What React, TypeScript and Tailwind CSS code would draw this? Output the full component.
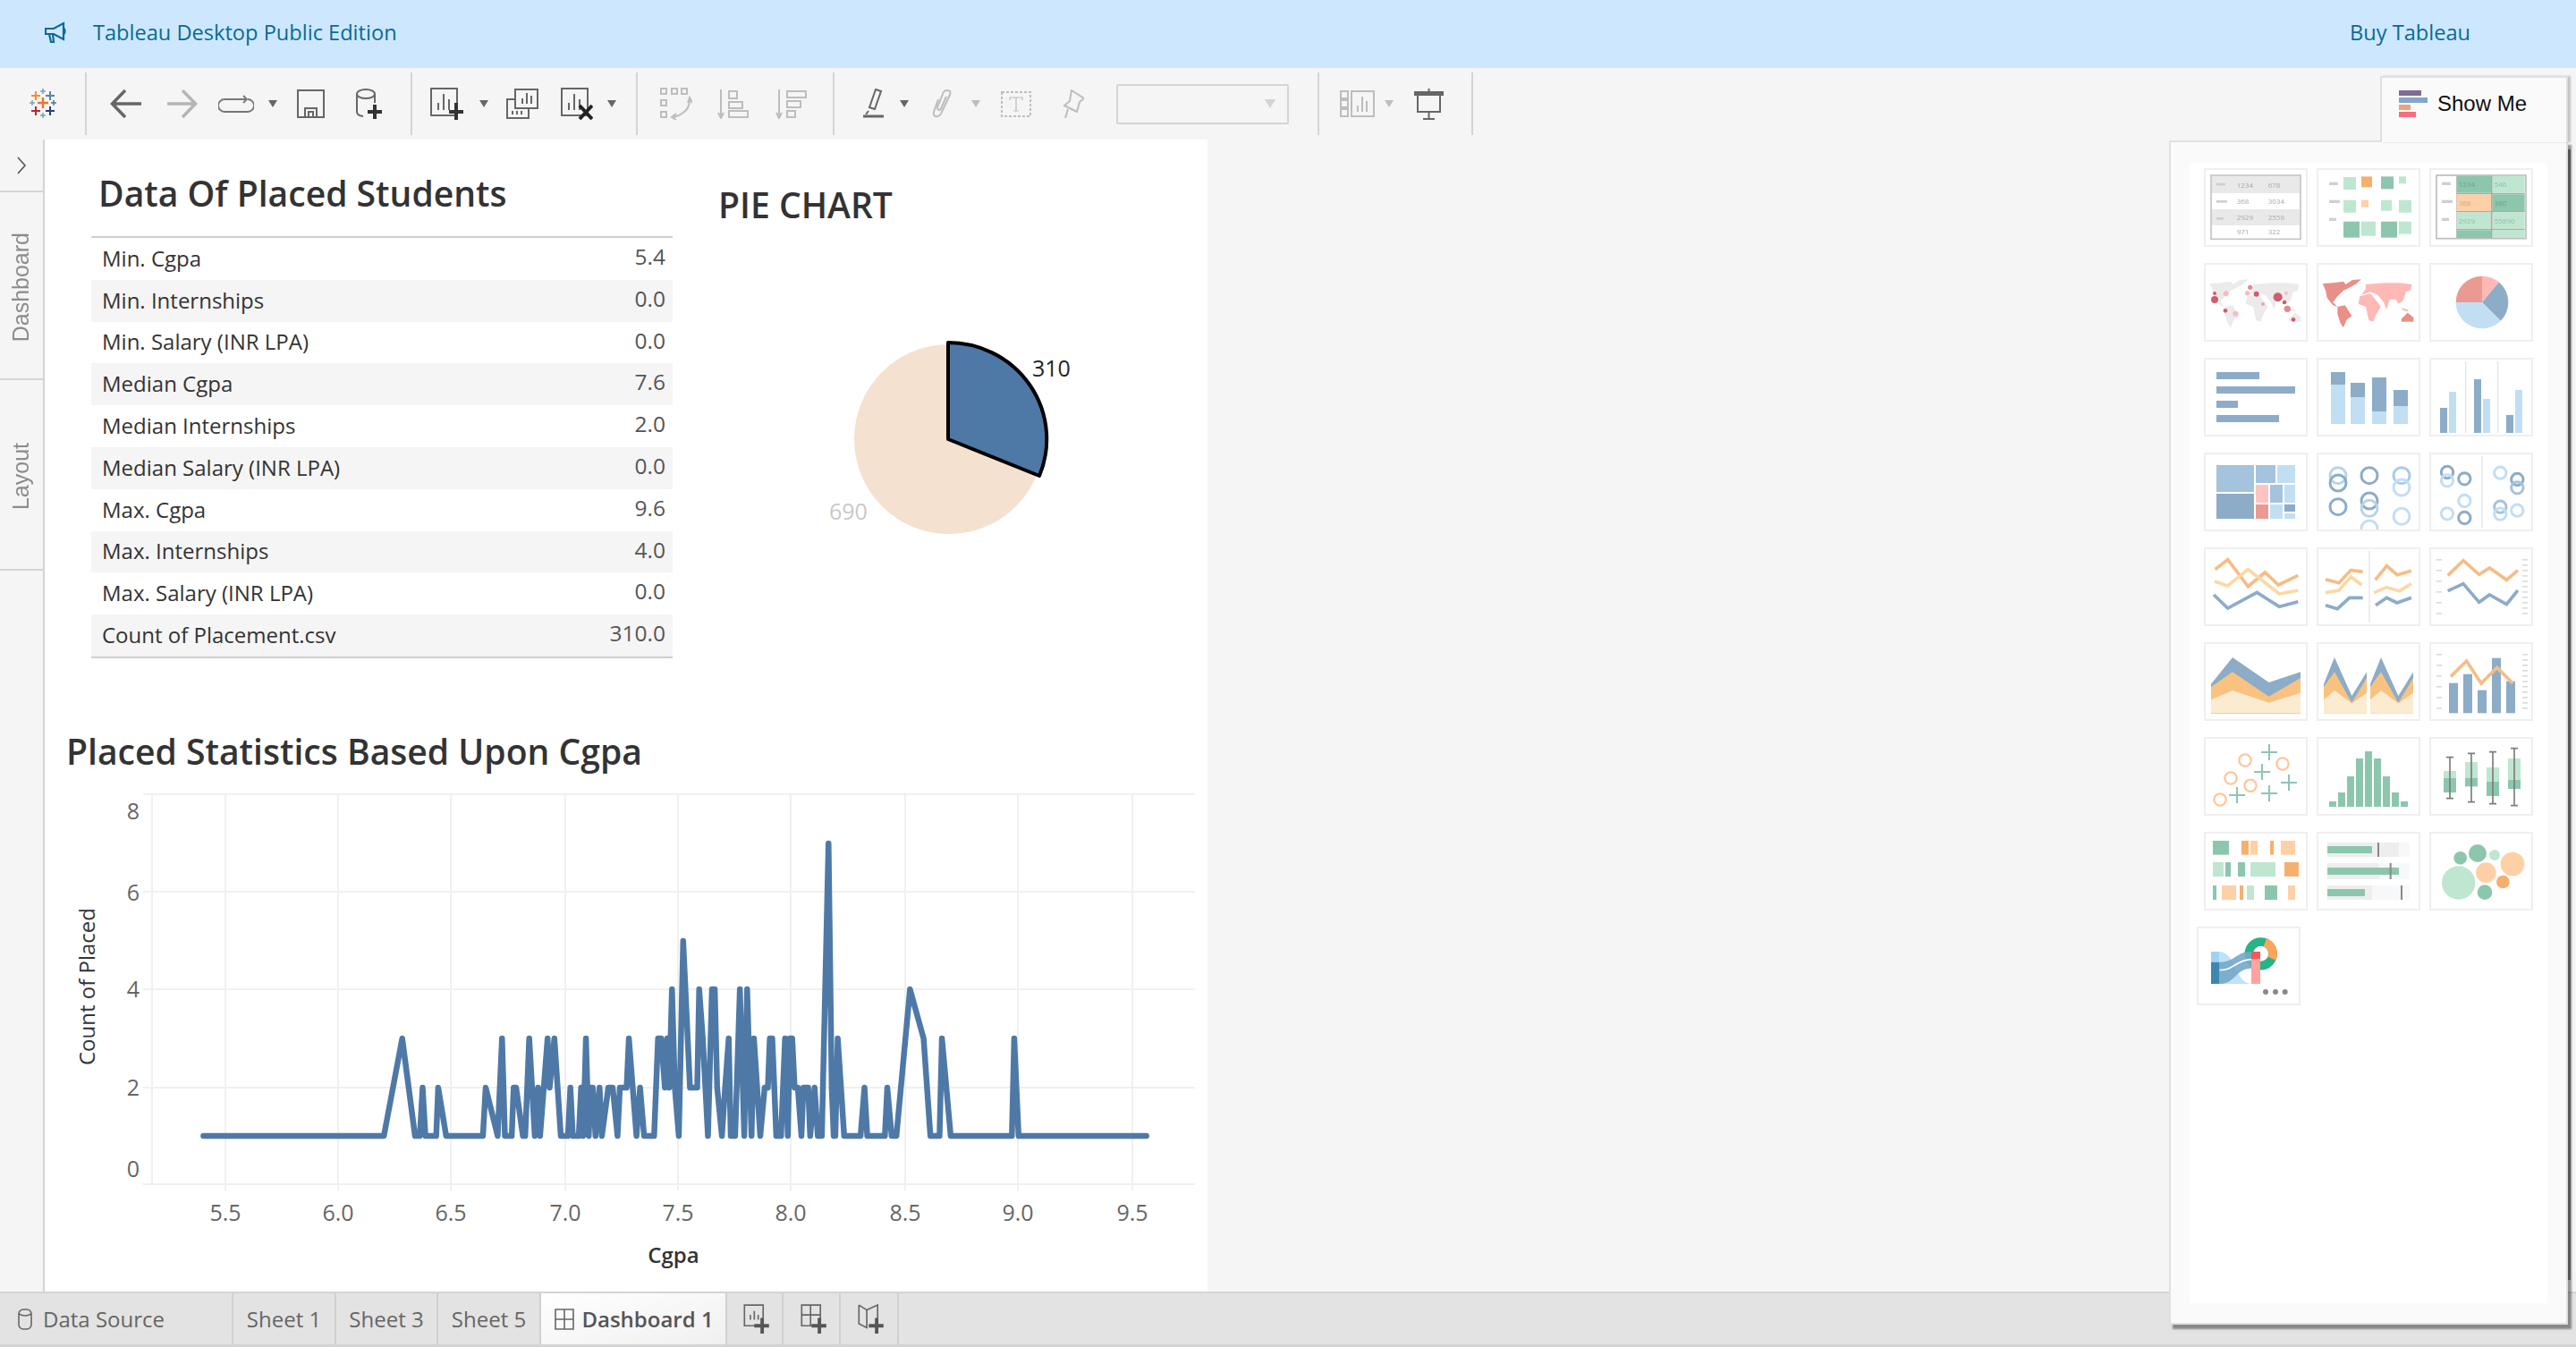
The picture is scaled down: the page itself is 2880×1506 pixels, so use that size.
const tableRows = [
  ["Min. Cgpa", "5.4"],
  ["Min. Internships", "0.0"],
  ["Min. Salary (INR LPA)", "0.0"],
  ["Median Cgpa", "7.6"],
  ["Median Internships", "2.0"],
  ["Median Salary (INR LPA)", "0.0"],
  ["Max. Cgpa", "9.6"],
  ["Max. Internships", "4.0"],
  ["Max. Salary (INR LPA)", "0.0"],
  ["Count of Placement.csv", "310.0"],
];

const levelY: Record<number, number> = { 1: 1270, 2: 1216, 3: 1161, 4: 1106, 5: 1052, 7: 943 };

// traced from the chart, x in two crops
const lineLeft = [
  [375, 1], [827, 1], [873, 3], [905, 1], [917, 1], [924, 2], [931, 1], [958, 1], [963, 2], [983, 1], [1075, 1], [1082, 2],
  [1112, 1], [1123, 3], [1130, 1], [1147, 1], [1152, 2], [1158, 2], [1175, 1], [1181, 1], [1191, 3], [1205, 1], [1213, 2],
  [1218, 1], [1237, 3], [1242, 2], [1254, 3], [1270, 1], [1288, 1], [1294, 2], [1300, 1], [1315, 1], [1321, 2], [1326, 1],
  [1333, 3], [1340, 1], [1345, 2], [1350, 2], [1357, 1], [1367, 2], [1373, 1], [1389, 2], [1400, 2], [1412, 1], [1418, 2],
  [1435, 2],
];
const lineRight = [
  [7, 3], [26, 1], [35, 2], [45, 1], [70, 1], [80, 3], [88, 3], [97, 2], [103, 3], [108, 2], [115, 4], [122, 2], [132, 1],
  [143, 5], [160, 2], [178, 2], [183, 4], [192, 3], [205, 1], [215, 4], [222, 4], [228, 2], [240, 1], [248, 2], [257, 3],
  [262, 1], [273, 1], [285, 4], [296, 1], [303, 4], [314, 1], [320, 3], [336, 1], [347, 2], [355, 2], [360, 3], [366, 3],
  [376, 1], [388, 1], [398, 3], [405, 1], [410, 3], [416, 3], [422, 2], [430, 2], [439, 1], [444, 2], [456, 2], [461, 1],
  [472, 2], [480, 1], [490, 1], [507, 7], [515, 2], [520, 1], [524, 1], [530, 3], [546, 1], [587, 1], [597, 2], [604, 1],
  [648, 1], [654, 2], [665, 1], [677, 1], [711, 4], [745, 3], [762, 1], [785, 1], [791, 3], [813, 1], [966, 1], [972, 3],
  [983, 1], [1303, 1],
];
const linePoints = [
  ...lineLeft.map(([x, v]) => `${(60 + x / 2.24).toFixed(1)},${levelY[v]}`),
  ...lineRight.map(([x, v]) => `${(700 + x / 2.24).toFixed(1)},${levelY[v]}`),
].join(" ");

const xTicks = [
  [252, "5.5"], [378, "6.0"], [504, "6.5"], [632, "7.0"], [758, "7.5"], [884, "8.0"], [1012, "8.5"], [1138, "9.0"], [1266, "9.5"],
] as const;
const yTicks = [
  [1324, "0", 1316], [1216, "2", 1225], [1106, "4", 1115], [997, "6", 1007], [888, "8", 916],
] as const;

const BLUE = "#8cacc8";
const MID = "#a4c3dc";
const PALE = "#c2def3";
const GREEN = "#8cc6ad";
const MINT = "#bfe6d0";
const ORANGE = "#f5b06e";
const PEACH = "#fdd0a6";

function Caret({ className, color }: { className: string; color: string }) {
  return (
    <svg className={className} viewBox="0 0 10 8" aria-hidden="true">
      <path d="M0 0H10L5 8Z" fill={color} />
    </svg>
  );
}

function Sep({ className }: { className: string }) {
  return <div className={`h-[70px] w-[2px] shrink-0 bg-[#d4d4d4] ${className}`} />;
}

function Cross({ x, y, s, w, c }: { x: number; y: number; s: number; w: number; c: string }) {
  return <path d={`M${x - s} ${y}H${x + s}M${x} ${y - s}V${y + s}`} stroke={c} strokeWidth={w} fill="none" />;
}

function TableauLogo() {
  return (
    <svg className="ml-[33px] h-[34px] w-[30px] shrink-0" viewBox="0 0 30 34" aria-hidden="true">
      <Cross x={7} y={8} s={5} w={2} c="#f28e2b" />
      <Cross x={15} y={3} s={3} w={1.5} c="#7b9eb8" />
      <Cross x={23} y={8} s={5} w={2} c="#59879b" />
      <Cross x={3} y={16} s={3} w={1.5} c="#7b9eb8" />
      <Cross x={27} y={16} s={3} w={1.5} c="#5b6f9c" />
      <Cross x={15} y={16} s={6} w={2.4} c="#e8762d" />
      <Cross x={7} y={25} s={5} w={2} c="#c72035" />
      <Cross x={23} y={25} s={5} w={2} c="#1f447a" />
      <Cross x={15} y={30} s={3} w={1.5} c="#7b9eb8" />
    </svg>
  );
}

function Toolbar() {
  const dark = "#666666";
  const off = "#bdbdbd";
  return (
    <div className="flex h-[80px] shrink-0 items-center bg-[#f5f5f5]">
      <TableauLogo />
      <Sep className="ml-[32px]" />
      <svg className="ml-[26px] h-[32px] w-[35px] shrink-0" viewBox="0 0 35 32" fill="none" stroke={dark} strokeWidth="3.5">
        <path d="M17 1L2.500 16L17 31M3 16H35" />
      </svg>
      <svg className="ml-[29px] h-[32px] w-[34px] shrink-0" viewBox="0 0 34 32" fill="none" stroke="#b5b5b5" strokeWidth="3.5">
        <path d="M17 1L31.500 16L17 31M31 16H0" />
      </svg>
      <svg className="ml-[23px] h-[20px] w-[40px] shrink-0" viewBox="0 0 40 20" fill="none" stroke="#777" strokeWidth="1.8">
        <path d="M31 5H7a6.500 6.500 0 0 0 0 14H33a6.500 6.500 0 0 0 0-14" />
        <path d="M28 1l4 4-4 4" />
      </svg>
      <Caret className="ml-[16px] h-[8px] w-[10px] shrink-0" color={dark} />
      <svg className="ml-[22px] h-[32px] w-[31px] shrink-0" viewBox="0 0 31 32" fill="none" stroke={dark} strokeWidth="2">
        <path d="M1 1H30V31H1Z" />
        <path d="M9 31V21H22V31M13 31V25H18V31" />
      </svg>
      <svg className="ml-[35px] h-[34px] w-[30px] shrink-0" viewBox="0 0 30 34" fill="none">
        <ellipse cx="11" cy="6" rx="10" ry="5" stroke={dark} strokeWidth="2" />
        <path d="M1 6V26Q1 30 8 31M21 6V16" stroke={dark} strokeWidth="2" />
        <path d="M21 18V34M13 26H29" stroke="#333" strokeWidth="4" />
      </svg>
      <Sep className="ml-[31px]" />
      <svg className="ml-[20px] h-[36px] w-[37px] shrink-0" viewBox="0 0 37 36" fill="none">
        <path d="M1 1H30V31H1ZM9 25V17M15 25V7M21 25V13" stroke={dark} strokeWidth="2" />
        <path d="M29 17V36M21 27H37" stroke="#333" strokeWidth="4" />
      </svg>
      <Caret className="ml-[18px] h-[8px] w-[10px] shrink-0" color={dark} />
      <svg className="ml-[20px] h-[34px] w-[36px] shrink-0" viewBox="0 0 36 34" fill="none" stroke={dark} strokeWidth="2">
        <path d="M10 1H35V22H10ZM18 17V11M23 17V5M28 17V8" />
        <path d="M10 12H1V33H25V22M7 25V29M12 25V29M17 25V29" />
      </svg>
      <svg className="ml-[25px] h-[36px] w-[36px] shrink-0" viewBox="0 0 36 36" fill="none">
        <path d="M1 1H30V31H1ZM9 25V17M15 25V7M21 25V13" stroke={dark} strokeWidth="2" />
        <path d="M21 20L35 35M35 20L21 35" stroke="#222" strokeWidth="4" />
      </svg>
      <Caret className="ml-[16px] h-[8px] w-[10px] shrink-0" color={dark} />
      <Sep className="ml-[22px]" />
      <svg className="ml-[25px] h-[36px] w-[36px] shrink-0" viewBox="0 0 36 36" fill="none" stroke={off} strokeWidth="2">
        <path d="M1 1H7V7H1ZM13 1H19V7H13ZM24 1H30V7H24ZM1 14H7V20H1ZM1 27H7V33H1Z" />
        <path d="M33 14Q33 28 15 33M31 17L33 11L36 17M18 29L13 33L18 36" />
      </svg>
      <svg className="ml-[28px] h-[34px] w-[35px] shrink-0" viewBox="0 0 35 34" fill="none" stroke={off} strokeWidth="2">
        <path d="M4 1V30M1 27L4 33L7 27M13 3H22V11H13ZM13 15H28V22H13ZM13 25H34V32H13Z" />
      </svg>
      <svg className="ml-[30px] h-[34px] w-[35px] shrink-0" viewBox="0 0 35 34" fill="none" stroke={off} strokeWidth="2">
        <path d="M4 1V30M1 27L4 33L7 27M13 3H34V10H13ZM13 14H28V21H13ZM13 25H22V32H13Z" />
      </svg>
      <Sep className="ml-[29px]" />
      <svg className="ml-[32px] h-[34px] w-[23px] shrink-0" viewBox="0 0 23 34" fill="none">
        <path d="M14 1L20 3L13 23L7 21Z M6 25L3 29" stroke={dark} strokeWidth="2" />
        <path d="M0 31H23" stroke={dark} strokeWidth="3" />
      </svg>
      <Caret className="ml-[18px] h-[8px] w-[10px] shrink-0" color={dark} />
      <svg className="ml-[25px] h-[32px] w-[25px] shrink-0" viewBox="0 0 25 32" fill="none" stroke={off} strokeWidth="2">
        <path d="M8 11L3 25Q2 31 7 30Q10 30 12 25L21 6Q23 1 18 1Q14 1 13 5L7 20Q7 23 9 23Q11 23 12 19L17 8" />
      </svg>
      <Caret className="ml-[20px] h-[8px] w-[10px] shrink-0" color={off} />
      <svg className="ml-[23px] h-[29px] w-[34px] shrink-0" viewBox="0 0 34 29" fill="none">
        <rect x="1" y="1" width="32" height="27" stroke={off} strokeWidth="2" strokeDasharray="3 2" />
        <path d="M10 7H24V10M10 7V10M17 7V22M14 22H20" stroke={off} strokeWidth="1.200" />
      </svg>
      <svg className="ml-[34px] h-[32px] w-[25px] shrink-0" viewBox="0 0 25 32" fill="none" stroke={off} strokeWidth="2">
        <path d="M11 1L25 10L20 14L17 25L3 18L9 13Z M7 22L4 32" />
      </svg>
      <div className="ml-[36px] flex h-[45px] w-[193px] shrink-0 items-center justify-end rounded-[2px] border-2 border-[#d4d4d4] pr-[12px]">
        <Caret className="h-[10px] w-[14px]" color="#d4d4d4" />
      </div>
      <Sep className="ml-[32px]" />
      <svg className="ml-[23px] h-[30px] w-[39px] shrink-0" viewBox="0 0 39 30" fill="none" stroke={off} strokeWidth="2">
        <path d="M1 1H9V9H1ZM1 11H9V19H1ZM1 21H9V29H1ZM13 1H38V29H13ZM20 24V17M25 24V7M30 24V12" />
      </svg>
      <Caret className="ml-[11px] h-[8px] w-[10px] shrink-0" color={off} />
      <svg className="ml-[23px] h-[35px] w-[33px] shrink-0" viewBox="0 0 33 35" fill="none" stroke={dark}>
        <path d="M0 5.500H33" strokeWidth="5" />
        <path d="M4 8V26H29V8" strokeWidth="2" />
        <path d="M16.500 0V3M16.500 26V34M10 34H23" strokeWidth="2" />
      </svg>
      <Sep className="ml-[31px]" />
    </div>
  );
}

function LeftStrip() {
  return (
    <div className="flex w-[50px] shrink-0 flex-col border-r-2 border-[#d4d4d4] bg-[#f5f5f5] text-[25px] text-[#8c8c8c] font-['Liberation_Sans',sans-serif]">
      <div className="flex h-[59px] items-center justify-center border-b-2 border-[#d4d4d4]">
        <svg className="h-[20px] w-[12px]" viewBox="0 0 12 20" fill="none" stroke="#555" strokeWidth="1.600">
          <path d="M2 1L10 10L2 19" />
        </svg>
      </div>
      <div className="flex h-[210px] items-center justify-center border-b-2 border-[#d4d4d4] pt-[4px]">
        <span className="rotate-180 [writing-mode:vertical-rl]">Dashboard</span>
      </div>
      <div className="flex h-[213px] items-center justify-center border-b-2 border-[#d4d4d4] pt-[4px]">
        <span className="rotate-180 [writing-mode:vertical-rl]">Layout</span>
      </div>
    </div>
  );
}

function DataTable() {
  return (
    <div className="w-[650px] border-y-2 border-[#cfcfcf] text-[24px] text-[#333]">
      {tableRows.map(([label, value], i) => (
        <div key={label} className={`flex h-[46.800px] items-center justify-between pl-[12px] pr-[8px] ${i % 2 === 1 ? "bg-[#f5f5f5]" : ""}`}>
          <span className="pb-[1px]">{label}</span>
          <span className="pb-[4px] text-[24.5px] text-[#555]">{value}</span>
        </div>
      ))}
    </div>
  );
}

function PieChart() {
  return (
    <svg className="h-[300px] w-[500px]" viewBox="780 302 500 300" aria-label="Pie chart">
      <circle cx="1061" cy="491" r="106" fill="#f4e1cf" />
      <path
        d="M1060 383A110 108 0 0 1 1162 532L1060 491Z"
        fill="#4e79a7"
        stroke="#000"
        strokeWidth="4"
        strokeLinejoin="round"
      />
      <text x="1154" y="421" fontSize="25" fill="#222">310</text>
      <text x="927" y="581" fontSize="25" fill="#c9c9c9">690</text>
    </svg>
  );
}

function LineChart() {
  return (
    <svg className="h-[562px] w-[1300px]" viewBox="50 882 1300 562" aria-label="Line chart">
      {xTicks.map(([x]) => (
        <path key={x} d={`M${x} 888V1331`} stroke="#f0f0f0" strokeWidth="2" />
      ))}
      {yTicks.map(([y]) => (
        <path key={y} d={`M160 ${y}H1336`} stroke="#f0f0f0" strokeWidth="2" />
      ))}
      <path d="M170 888V1324" stroke="#f0f0f0" strokeWidth="2" />
      <polyline points={linePoints} fill="none" stroke="#4e79a7" strokeWidth="6.500" strokeLinejoin="round" strokeLinecap="round" />
      {xTicks.map(([x, label]) => (
        <text key={x} x={x} y="1365" fontSize="25" fill="#666" textAnchor="middle">{label}</text>
      ))}
      {yTicks.map(([y, label, base]) => (
        <text key={y} x="156" y={base} fontSize="25" fill="#666" textAnchor="end">{label}</text>
      ))}
      <text x="753" y="1412" fontSize="24" fontWeight="600" fill="#333" textAnchor="middle">Cgpa</text>
      <text transform="translate(106 1103) rotate(-90)" fontSize="24" fill="#333" textAnchor="middle">Count of Placed</text>
    </svg>
  );
}

function Dashboard() {
  return (
    <div className="flex w-[1300px] shrink-0 flex-col bg-white">
      <div className="flex h-[644px]">
        <div className="pl-[52px]">
          <div className="flex h-[108px] items-center pl-[8px] pt-[12px] text-[39.1px] font-semibold text-[#333]">Data Of Placed Students</div>
          <DataTable />
        </div>
        <div className="pl-[28px]">
          <div className="flex h-[146px] items-center pl-[23px] pt-[1px] text-[39.1px] font-semibold text-[#333]">PIE CHART</div>
          <PieChart />
        </div>
      </div>
      <div className="flex h-[80px] items-center pl-[24px] text-[39.1px] font-semibold text-[#333]">Placed Statistics Based Upon Cgpa</div>
      <div className="h-[2px]" />
      <LineChart />
    </div>
  );
}

function Rects({ items, fill }: { items: number[][]; fill: string }) {
  return (
    <>
      {items.map(([x, y, w, h]) => (
        <rect key={`${x}-${y}`} x={x} y={y} width={w} height={h} fill={fill} />
      ))}
    </>
  );
}

function Rings({ items, r, w }: { items: [number, number, string][]; r: number; w: number }) {
  return (
    <>
      {items.map(([x, y, c]) => (
        <circle key={`${x}-${y}`} cx={x} cy={y} r={r} fill="none" stroke={c} strokeWidth={w} />
      ))}
    </>
  );
}

function Line({ d, c, w = 11 }: { d: string; c: string; w?: number }) {
  return <polyline points={d} fill="none" stroke={c} strokeWidth={w} />;
}

function Ticks({ step }: { step: number }) {
  return (
    <>
      {[39, 75, 111, 147, 183, 219].map((y) => (
        <rect key={y} x="24" y={y} width="18" height="5" fill="#dcdcdc" />
      ))}
      {Array.from({ length: Math.floor(180 / step) + 1 }, (_, i) => 39 + i * step).map((y) => (
        <rect key={y} x="312" y={y} width="18" height="5" fill="#dcdcdc" />
      ))}
    </>
  );
}

function WorldMap({ america, rest, oz }: { america: string; rest: string; oz: string }) {
  return (
    <>
      <polygon points="20,69 55,67 90,62 98,72 120,57 150,55 130,72 102,87 90,92 70,112 55,132 70,147 55,142 35,117 30,92" fill={america} />
      <polygon points="70,147 95,142 118,177 100,192 90,217 80,202 70,172" fill={america} />
      <polygon points="165,72 200,69 230,67 280,67 320,72 315,92 300,97 290,127 275,137 265,122 245,122 235,157 225,132 205,107 180,97 150,107 165,87" fill={rest} />
      <polygon points="145,112 180,102 205,132 215,147 200,172 190,197 175,192 165,147 140,137" fill={rest} />
      <polygon points="285,150 310,158 305,163 290,158" fill={rest} />
      <polygon points="285,187 305,167 325,182 325,197 285,197" fill={oz} />
    </>
  );
}

const bubbleDots: [number, number, number, string][] = [
  [36, 123, 12, "#cf5d6d"], [36, 102, 6, "#cf5d6d"], [74, 103, 9, "#f7bdbd"], [155, 82, 8, "#e48a8a"], [146, 101, 8, "#f7bdbd"],
  [176, 104, 9, "#cf5d6d"], [248, 115, 15, "#cf5d6d"], [276, 101, 6, "#f7bdbd"], [270, 132, 7, "#cf5d6d"], [280, 154, 11, "#e48a8a"],
  [198, 138, 6, "#f0a5a5"], [72, 160, 7, "#cf5d6d"], [106, 170, 9, "#f7bdbd"], [300, 190, 7, "#cf5d6d"],
];

const thumbText = { fontSize: 24, fill: "#a8a8a8" };

const thumbs: React.ReactNode[] = [
  <>
    <rect x="24" y="24" width="300" height="214" fill="#fff" stroke="#c4c4c4" strokeWidth="5" />
    <Rects fill="#e9e9e9" items={[[27, 27, 294, 57], [27, 138, 294, 54]]} />
    <Rects fill="#cfcfcf" items={[[42, 50, 30, 8], [42, 108, 36, 8], [42, 165, 24, 8]]} />
    <text x="110" y="65" {...thumbText}>1234</text><text x="215" y="65" {...thumbText}>678</text>
    <text x="110" y="120" {...thumbText}>368</text><text x="215" y="120" {...thumbText}>3034</text>
    <text x="110" y="174" {...thumbText}>2929</text><text x="215" y="174" {...thumbText}>2558</text>
    <text x="110" y="222" {...thumbText}>971</text><text x="215" y="222" {...thumbText}>322</text>
  </>,
  <>
    <Rects fill="#d0d0d0" items={[[42, 47, 30, 10], [42, 107, 36, 10], [42, 167, 24, 10]]} />
    <Rects fill={MINT} items={[[90, 30, 42, 42], [276, 28, 24, 24], [90, 107, 42, 42], [216, 107, 36, 36], [276, 107, 42, 42], [150, 179, 48, 48], [276, 179, 42, 42]]} />
    <Rects fill={GREEN} items={[[216, 28, 42, 42], [90, 179, 54, 54], [216, 179, 54, 54]]} />
    <Rects fill={ORANGE} items={[[150, 28, 36, 36]]} />
    <Rects fill={PEACH} items={[[150, 107, 24, 24]]} />
  </>,
  <>
    <rect x="24" y="24" width="300" height="212" fill="#fff" stroke="#bdbdbd" strokeWidth="5" />
    <Rects fill="#d0d0d0" items={[[42, 47, 30, 10], [42, 107, 36, 10], [42, 167, 24, 10]]} />
    <Rects fill="#a9a9a9" items={[[90, 26, 2, 208], [207, 26, 5, 208], [92, 83, 228, 5], [92, 144, 228, 4], [92, 204, 228, 4]]} />
    <Rects fill={GREEN} items={[[92, 26, 115, 57], [212, 88, 108, 56], [92, 208, 115, 26]]} />
    <Rects fill={MINT} items={[[212, 26, 108, 57], [92, 148, 115, 56], [212, 148, 108, 56], [212, 208, 108, 26]]} />
    <Rects fill={PEACH} items={[[92, 88, 115, 56]]} />
    <text x="98" y="62" {...thumbText} fill="#6f9f8c">1234</text><text x="218" y="62" {...thumbText} fill="#93bda8">546</text>
    <text x="98" y="125" {...thumbText} fill="#d0a682">368</text><text x="218" y="125" {...thumbText} fill="#6f9f8c">380</text>
    <text x="98" y="186" {...thumbText} fill="#93bda8">2929</text><text x="218" y="186" {...thumbText} fill="#93bda8">55890</text>
  </>,
  <>
    <WorldMap america="#ebebeb" rest="#ebebeb" oz="#ebebeb" />
    {bubbleDots.map(([x, y, r, c]) => (
      <circle key={`${x}-${y}`} cx={x} cy={y} r={r} fill={c} />
    ))}
  </>,
  <WorldMap america="#e89088" rest="#ffb9b5" oz="#e89088" />,
  <>
    <path d="M177 132L177 44A88 88 0 0 1 233.600 64.600Z" fill="#ffb9b5" />
    <path d="M177 132L233.600 64.600A88 88 0 0 1 239.200 194.200Z" fill={BLUE} />
    <path d="M177 132L239.200 194.200A88 88 0 0 1 89 132Z" fill={PALE} />
    <path d="M177 132L89 132A88 88 0 0 1 177 44Z" fill="#ea9a90" />
  </>,
  <Rects fill={BLUE} items={[[42, 48, 144, 24], [42, 96, 264, 24], [42, 144, 72, 24], [42, 192, 210, 24]]} />,
  <>
    <Rects fill={BLUE} items={[[48, 48, 48, 42], [114, 84, 48, 48], [186, 66, 48, 114], [258, 108, 48, 54]]} />
    <Rects fill={PALE} items={[[48, 90, 48, 132], [114, 132, 48, 90], [186, 180, 48, 42], [258, 162, 48, 60]]} />
  </>,
  <>
    <Rects fill="#e4e4e4" items={[[120, 12, 4, 240], [228, 12, 4, 240]]} />
    <Rects fill={BLUE} items={[[36, 168, 24, 84], [150, 72, 24, 180], [258, 192, 24, 60]]} />
    <Rects fill={PALE} items={[[66, 114, 24, 138], [180, 138, 24, 114], [288, 108, 24, 144]]} />
  </>,
  <>
    <Rects fill={MID} items={[[42, 42, 126, 90], [174, 42, 66, 60], [222, 108, 42, 60]]} />
    <Rects fill={PALE} items={[[246, 42, 60, 60], [270, 108, 36, 60], [222, 174, 42, 48], [270, 204, 36, 18]]} />
    <Rects fill={BLUE} items={[[42, 138, 126, 84], [270, 174, 36, 24]]} />
    <Rects fill="#ffc4c0" items={[[174, 108, 42, 60]]} />
    <Rects fill="#ea9a90" items={[[174, 174, 42, 48]]} />
  </>,
  <Rings
    r={27}
    w={9}
    items={[[72, 77, "#b8d3e8"], [72, 102, BLUE], [177, 77, BLUE], [72, 182, BLUE], [177, 162, BLUE], [177, 187, "#b8d3e8"], [285, 77, "#a9cbe6"], [285, 117, PALE], [285, 214, PALE], [177, 255, PALE]]}
  />,
  <>
    <rect x="175" y="12" width="4" height="240" fill="#e4e4e4" />
    <Rings
      r={20}
      w={9}
      items={[[60, 66, BLUE], [60, 94, PALE], [118, 88, BLUE], [118, 162, PALE], [60, 205, PALE], [118, 219, BLUE], [238, 68, PALE], [295, 90, BLUE], [295, 118, MID], [238, 182, MID], [238, 206, PALE], [295, 194, PALE]]}
    />
  </>,
  <>
    <Line d="38,74 80,41 148,131 205,84 250,126 316,94" c="#f5bd85" />
    <Line d="36,114 80,129 148,74 253,156 316,144" c="#fbd9a5" />
    <Line d="33,159 80,204 178,151 253,199 316,182" c={BLUE} />
  </>,
  <>
    <rect x="175" y="12" width="4" height="240" fill="#e4e4e4" />
    <Line d="30,107 75,119 115,76 155,82" c="#f5bd85" />
    <Line d="30,152 75,144 115,99 152,126" c="#fbd9a5" />
    <Line d="30,194 70,206 110,169 155,169" c={BLUE} />
    <Line d="197,109 235,62 270,92 318,79" c="#f5bd85" />
    <Line d="192,152 235,134 278,146 318,122" c="#fbd9a5" />
    <Line d="198,194 235,169 270,186 318,169" c={BLUE} />
  </>,
  <>
    <Ticks step={18} />
    <Line d="62,94 114,44 167,91 202,69 259,109 297,77" c="#f5bd85" />
    <Line d="62,146 114,122 167,184 202,159 259,191 297,144" c={BLUE} />
  </>,
  <>
    <polygon points="24,140 96,51 218,135 324,100 324,240 24,240" fill={BLUE} />
    <polygon points="24,150 96,100 218,182 324,120 324,240 24,240" fill="#fac280" />
    <polygon points="24,193 96,162 218,203 324,170 324,238 24,238" fill="#fbebd0" />
  </>,
  <>
    <polygon points="24,140 60,51 118,180 168,100 168,238 24,238" fill={BLUE} />
    <polygon points="24,150 60,100 118,203 168,120 168,238 24,238" fill="#fac280" />
    <polygon points="24,193 60,162 118,205 168,170 168,238 24,238" fill="#fbebd0" />
    <polygon points="180,140 216,51 274,180 324,100 324,238 180,238" fill={BLUE} />
    <polygon points="180,150 216,100 274,203 324,120 324,238 180,238" fill="#fac280" />
    <polygon points="180,193 216,162 274,205 324,170 324,238 180,238" fill="#fbebd0" />
  </>,
  <>
    <Ticks step={18} />
    <Rects fill={BLUE} items={[[66, 137, 30, 101], [114, 107, 30, 131], [162, 161, 30, 77], [210, 53, 30, 185], [258, 131, 30, 107]]} />
    <Line d="72,115 125,63 174,138 227,85 280,138" c="#f5bd85" />
  </>,
  <>
    <Rings r={20} w={7} items={[[138, 78, "#fdc79c"], [90, 138, "#fdc79c"], [264, 90, "#fdc79c"], [156, 163, "#fdc79c"], [54, 210, "#fdc79c"]]} />
    {[[219, 51], [195, 117], [285, 153], [219, 189], [111, 195]].map(([x, y]) => (
      <Cross key={x + y} x={x} y={y} s={27} w={6} c={GREEN} />
    ))}
  </>,
  <Rects
    fill={GREEN}
    items={[[42, 216, 24, 18], [72, 186, 24, 48], [102, 132, 24, 102], [132, 72, 24, 162], [162, 48, 24, 186], [192, 72, 24, 162], [222, 132, 24, 102], [252, 186, 24, 48], [282, 216, 24, 18]]}
  />,
  <>
    <Rects fill={MINT} items={[[48, 114, 42, 24], [120, 84, 42, 54], [192, 102, 42, 48], [264, 72, 42, 72]]} />
    <Rects fill={GREEN} items={[[48, 138, 42, 48], [120, 138, 42, 28], [192, 150, 42, 48], [264, 144, 42, 30]]} />
    <path
      d="M69 68V206M57 68H81M57 206H81M141 55V218M129 55H153M129 218H153M213 50V224M201 50H225M201 224H225M285 38V230M273 38H297M273 230H297"
      fill="none"
      stroke="#7d7d7d"
      strokeWidth="5"
    />
  </>,
  <>
    <Rects fill={GREEN} items={[[30, 30, 54, 47], [72, 102, 18, 48], [114, 102, 24, 48], [30, 180, 12, 48], [204, 180, 42, 48]]} />
    <Rects fill={MINT} items={[[30, 102, 36, 48], [156, 102, 84, 48], [144, 180, 24, 48]]} />
    <Rects fill={ORANGE} items={[[126, 30, 24, 47], [222, 30, 12, 47], [270, 102, 48, 48], [120, 180, 12, 48]]} />
    <Rects fill={PEACH} items={[[156, 30, 24, 47], [258, 30, 48, 47], [60, 180, 48, 48], [282, 180, 24, 48]]} />
  </>,
  <>
    <Rects fill="#f7f8fa" items={[[36, 36, 276, 48], [36, 105, 276, 54], [36, 180, 276, 48]]} />
    <Rects fill="#eeeeee" items={[[36, 36, 240, 48], [36, 105, 174, 54], [36, 180, 150, 48]]} />
    <Rects fill={GREEN} items={[[36, 48, 150, 24], [36, 120, 240, 24], [36, 192, 126, 24]]} />
    <Rects fill="#888" items={[[204, 36, 6, 48], [245, 105, 6, 54], [282, 180, 6, 48]]} />
  </>,
  <>
    <circle cx="162" cy="72" r="30" fill={GREEN} />
    <circle cx="104" cy="88" r="22" fill={GREEN} />
    <circle cx="219" cy="78" r="18" fill={MINT} />
    <circle cx="279" cy="108" r="40" fill={PEACH} />
    <circle cx="190" cy="137" r="34" fill={PEACH} />
    <circle cx="247" cy="168" r="22" fill={ORANGE} />
    <circle cx="98" cy="171" r="56" fill={MINT} />
    <circle cx="186" cy="203" r="25" fill={GREEN} />
  </>,
  <>
    <circle cx="215" cy="91" r="40" fill="none" stroke="#27b287" strokeWidth="29" />
    <path d="M229 53A40 40 0 0 1 252 107" fill="none" stroke="#f9a65a" strokeWidth="29" />
    <path d="M76 84C130 84 130 192 183 192H76Z" fill="#b8dff5" opacity="0.9" />
    <path d="M76 119C130 119 130 84 183 84V140C130 140 130 192 76 192Z" fill="#75a9ca" opacity="0.9" />
    <path d="M76 145C120 150 130 112 183 110" fill="none" stroke="#fff" strokeWidth="5" />
    <rect x="48" y="84" width="28" height="35" fill="#9dd3f2" />
    <rect x="48" y="119" width="28" height="73" fill="#3f87b0" />
    <rect x="183" y="84" width="30" height="25" fill="#f25a58" />
    <rect x="183" y="109" width="30" height="83" fill="#fea39f" />
    <circle cx="231" cy="219" r="9" fill="#888" />
    <circle cx="264" cy="219" r="9" fill="#888" />
    <circle cx="296" cy="219" r="9" fill="#888" />
  </>,
];

function ShowMePanel() {
  return (
    <div className="absolute right-[9px] top-[85px] flex h-[1396px] w-[446px] flex-col">
      <div className="z-10 -mb-[2px] ml-auto flex h-[74px] w-[210px] items-start gap-[11px] border-x-2 border-t-2 border-[#e0e0e0] bg-[#fafafa] pl-[19px] pt-[14px] shadow-[3px_0_2px_rgba(0,0,0,0.2)]">
        <div className="flex flex-col gap-[2px]">
          <div className="h-[6px] w-[25px] bg-[#7f6c92]" />
          <div className="h-[6px] w-[32px] bg-[#84a6cb]" />
          <div className="h-[6px] w-[13px] bg-[#f0a277]" />
          <div className="h-[6px] w-[19px] bg-[#f76d7e]" />
        </div>
        <span className="-mt-[3px] text-[24px] leading-[36px] text-[#111] font-['Liberation_Sans',sans-serif]">Show Me</span>
      </div>
      <div className="relative flex-1 border-2 border-[#e0e0e0] bg-[#fafafa] px-[21px] pb-[22px] pt-[23px] shadow-[4px_5px_2px_rgba(0,0,0,0.4)]">
        <div className="absolute -right-[5px] bottom-[48px] top-[8px] w-[3px] bg-[#555]" />
        <div className="h-full bg-white pl-[16px] pt-[6px]">
          <div className="grid grid-cols-[repeat(3,116px)] gap-x-[10px] gap-y-[18px]">
            {thumbs.map((t, i) => (
              <div key={i} className={`h-[88px] w-[116px] border-2 border-[#efefef] bg-white ${i === 24 ? "-ml-[8px]" : ""}`}>
                <svg className="h-[84px] w-[112px] blur-[0.4px]" viewBox="6 6 336 252" aria-hidden="true">
                  {t}
                </svg>
              </div>
            ))}
          </div>
        </div>
      </div>
    </div>
  );
}

function AddIcon({ children, className }: { children: React.ReactNode; className: string }) {
  return (
    <div className={`flex items-center justify-center border-r-2 border-[#d0d0d0] pl-[4px] ${className}`}>
      <svg className="h-[33px] w-[29px]" viewBox="0 0 26 30" fill="none">
        {children}
        <path d="M19 14V30M11 22H26" stroke="#555" strokeWidth="3.500" />
      </svg>
    </div>
  );
}

function BottomTabs() {
  const tab = "flex items-center justify-center border-r-2 border-[#d0d0d0] text-[24px] text-[#666]";
  return (
    <div className="flex h-[62px] shrink-0 border-y-2 border-b-[3px] border-[#d4d4d4] bg-[#e3e3e3]">
      <div className={`${tab} w-[261px] justify-start gap-[12px] pl-[20px]`}>
        <svg className="h-[24px] w-[16px]" viewBox="0 0 16 24" fill="none" stroke="#666" strokeWidth="1.600">
          <rect x="1" y="1" width="14" height="22" rx="5" />
          <path d="M1 6Q8 10 15 6" />
        </svg>
        <span>Data Source</span>
      </div>
      <div className={`${tab} w-[115px]`}>Sheet 1</div>
      <div className={`${tab} w-[114px]`}>Sheet 3</div>
      <div className={`${tab} w-[115px]`}>Sheet 5</div>
      <div className="flex w-[208px] items-center justify-center gap-[8px] border-r-2 border-[#d0d0d0] bg-gradient-to-br from-white to-[#f0f0f0] pl-[2px] text-[24px] font-semibold text-[#555]">
        <svg className="h-[24px] w-[22px]" viewBox="0 0 22 24" fill="none" stroke="#666" strokeWidth="1.600">
          <path d="M1 1H21V23H1ZM11 1V23M1 12H21" />
        </svg>
        <span>Dashboard 1</span>
      </div>
      <AddIcon className="w-[63px]">
        <path d="M1 1H20V22H1ZM7 16V11M11 16V7M15 16V11" stroke="#666" strokeWidth="1.500" />
      </AddIcon>
      <AddIcon className="w-[64px]">
        <path d="M1 1H20V22H1ZM10 1V22M1 11H20" stroke="#666" strokeWidth="1.500" />
      </AddIcon>
      <AddIcon className="w-[65px]">
        <path d="M1 1L9 6L20 1V15M1 1V20L9 24V6" stroke="#666" strokeWidth="1.500" />
      </AddIcon>
    </div>
  );
}

export default function App() {
  return (
    <div className="relative flex h-[1506px] w-[2880px] flex-col overflow-hidden bg-[#f5f5f5] font-['Open_Sans',sans-serif]">
      <div className="flex h-[76px] shrink-0 items-center justify-between bg-[#cde8fe] pb-[3px] pl-[50px] pr-[118px] text-[23.6px] text-[#0b6a93]">
        <div className="flex items-center gap-[30px]">
          <svg className="h-[24px] w-[24px]" viewBox="0 0 24 24" fill="none" stroke="#0b6a93" strokeWidth="2.200">
            <path d="M1 8H10L21 2V20L10 14H1ZM5 14L7 23H10L9 14M21 7Q24 11 21 15" />
          </svg>
          <span>Tableau Desktop Public Edition</span>
        </div>
        <span>Buy Tableau</span>
      </div>
      <Toolbar />
      <div className="flex min-h-0 flex-1">
        <LeftStrip />
        <Dashboard />
      </div>
      <BottomTabs />
      <ShowMePanel />
    </div>
  );
}
